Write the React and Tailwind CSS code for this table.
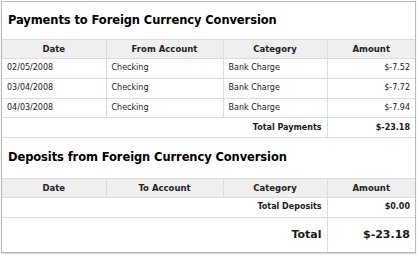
const payments = [
  { date: "02/05/2008", account: "Checking", category: "Bank Charge", amount: "$-7.52" },
  { date: "03/04/2008", account: "Checking", category: "Bank Charge", amount: "$-7.72" },
  { date: "04/03/2008", account: "Checking", category: "Bank Charge", amount: "$-7.94" },
];

const font = { fontFamily: '"DejaVu Sans", Verdana, sans-serif' };

function Cols() {
  return (
    <colgroup>
      <col className="w-[104px]" />
      <col className="w-[117px]" />
      <col className="w-[104px]" />
      <col />
    </colgroup>
  );
}

function Head({ second }) {
  const th = "h-[19px] border border-[#dcdcdc] bg-[#efefef] text-center font-bold text-[8.5px] text-[#222] p-0";
  return (
    <thead>
      <tr>
        <th className={`${th} border-l-0`}>Date</th>
        <th className={th}>{second}</th>
        <th className={th}>Category</th>
        <th className={`${th} border-r-0`}>Amount</th>
      </tr>
    </thead>
  );
}

export default function App() {
  const td = "h-[19.75px] border border-[#dcdcdc] px-[5px] py-0 text-[8px] text-[#1a1a1a]";
  return (
    <div className="bg-white w-[417px] h-[255px] pt-px pl-px" style={font}>
      <div className="w-[415px] h-[252px] border border-[#b9b9b9] shadow-[0_1px_1px_rgba(0,0,0,0.15)] overflow-hidden">
        <h2 className="h-[37px] flex items-center pl-[6px] text-[11.5px] font-bold text-black tracking-[-0.1px]">
          Payments to Foreign Currency Conversion
        </h2>
        <table className="w-full table-fixed border-collapse">
          <Cols />
          <Head second="From Account" />
          <tbody>
            {payments.map((p) => (
              <tr key={p.date}>
                <td className={`${td} border-l-0`}>{p.date}</td>
                <td className={td}>{p.account}</td>
                <td className={td}>{p.category}</td>
                <td className={`${td} border-r-0 text-right`}>{p.amount}</td>
              </tr>
            ))}
            <tr>
              <td colSpan={3} className={`${td} border-l-0 text-right font-bold`}>Total Payments</td>
              <td className={`${td} border-r-0 text-right font-bold`}>$-23.18</td>
            </tr>
          </tbody>
        </table>
        <h2 className="h-[40px] flex items-center pl-[6px] text-[11.5px] font-bold text-black tracking-[-0.1px]">
          Deposits from Foreign Currency Conversion
        </h2>
        <table className="w-full table-fixed border-collapse">
          <Cols />
          <Head second="To Account" />
          <tbody>
            <tr>
              <td colSpan={3} className={`${td} border-l-0 text-right font-bold`}>Total Deposits</td>
              <td className={`${td} border-r-0 text-right font-bold`}>$0.00</td>
            </tr>
            <tr>
              <td colSpan={3} className={`${td} h-[36px] border-l-0 border-b-0 text-right font-bold text-[11px]`}>Total</td>
              <td className={`${td} h-[36px] border-r-0 border-b-0 text-right font-bold text-[11px]`}>$-23.18</td>
            </tr>
          </tbody>
        </table>
      </div>
    </div>
  );
}
